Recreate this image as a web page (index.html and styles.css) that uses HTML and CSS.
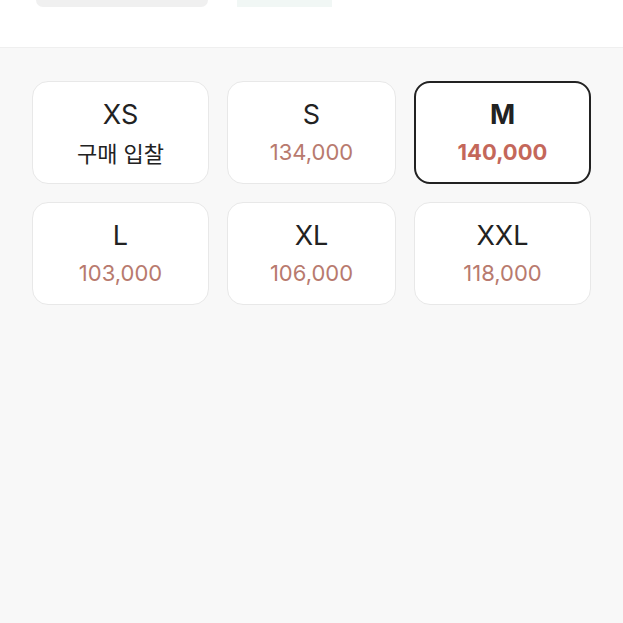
FILE: index.html
```html
<!DOCTYPE html>
<html lang="ko">
<head>
<meta charset="utf-8">
<link rel="stylesheet" href="styles.css">
</head>
<body>
<header class="top">
  <div class="tab tab-grey"></div>
  <div class="tab tab-mint"></div>
</header>
<main class="sizes">
  <div class="card"><div class="size">XS</div><div class="sub">구매 입찰</div></div>
  <div class="card"><div class="size">S</div><div class="price">134,000</div></div>
  <div class="card selected"><div class="size">M</div><div class="price">140,000</div></div>
  <div class="card"><div class="size">L</div><div class="price">103,000</div></div>
  <div class="card"><div class="size">XL</div><div class="price">106,000</div></div>
  <div class="card"><div class="size">XXL</div><div class="price">118,000</div></div>
</main>
</body>
</html>
```
FILE: styles.css
```css
html, body {
  margin: 0;
  padding: 0;
  height: 100%;
  background: #f8f8f8;
  font-family: Inter, "Noto Sans CJK KR", sans-serif;
}
.top {
  height: 47px;
  background: #fff;
  border-bottom: 1px solid #efefef;
  display: flex;
  align-items: flex-start;
}
.tab {
  height: 7px;
}
.tab-grey {
  margin-left: 36px;
  width: 172px;
  background: #f0f0f0;
  border-radius: 0 0 14px 14px;
}
.tab-mint {
  margin-left: 29px;
  width: 95px;
  background: #f1f7f5;
}
.sizes {
  display: grid;
  grid-template-columns: 177px 169px 177px;
  column-gap: 18px;
  row-gap: 18px;
  padding: 33px 0 0 32px;
}
.card {
  background: #fff;
  border: 1px solid #e8e8e8;
  border-radius: 16px;
  height: 103px;
  box-sizing: border-box;
  display: flex;
  flex-direction: column;
  align-items: center;
  justify-content: center;
  gap: 8px;
}
.card.selected {
  border: 2px solid #222;
}
.size {
  font-size: 27px;
  color: #222;
  line-height: 30px;
}
.selected .size {
  font-weight: 700;
}
.price {
  font-size: 22px;
  color: #b87a6e;
  line-height: 28px;
}
.selected .price {
  font-weight: 700;
  color: #c4675a;
}
.sub {
  font-family: "Noto Sans CJK KR", sans-serif;
  font-size: 22px;
  color: #222;
  line-height: 28px;
}
```
